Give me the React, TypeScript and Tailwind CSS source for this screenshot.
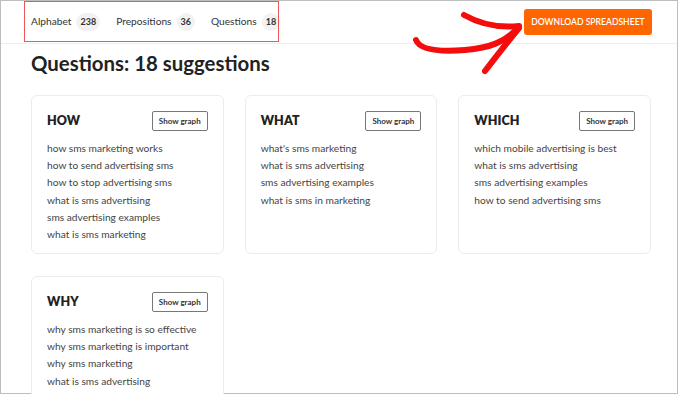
import React from "react"

const groups = [
  {
    title: "HOW",
    items: [
      "how sms marketing works",
      "how to send advertising sms",
      "how to stop advertising sms",
      "what is sms advertising",
      "sms advertising examples",
      "what is sms marketing",
    ],
  },
  {
    title: "WHAT",
    items: ["what's sms marketing", "what is sms advertising", "sms advertising examples", "what is sms in marketing"],
  },
  {
    title: "WHICH",
    items: [
      "which mobile advertising is best",
      "what is sms advertising",
      "sms advertising examples",
      "how to send advertising sms",
    ],
  },
  {
    title: "WHY",
    items: [
      "why sms marketing is so effective",
      "why sms marketing is important",
      "why sms marketing",
      "what is sms advertising",
    ],
  },
]

const tabs = [
  { label: "Alphabet", count: "238" },
  { label: "Prepositions", count: "36" },
  { label: "Questions", count: "18" },
]

function Card({ title, items }: { title: string; items: string[] }) {
  return (
    <div className="rounded-md border border-[#ececec] bg-white px-[15px] pt-[15px] pb-[14px] h-[159px]">
      <div className="flex items-center justify-between">
        <h3 className="text-[12.5px] font-extrabold text-[#222] tracking-[0.1px]">{title}</h3>
        <button className="h-[20px] px-[6px] rounded-[2px] border border-[#777] text-[8px] font-bold text-[#333]">
          Show graph
        </button>
      </div>
      <ul className="mt-[9px] flex flex-col">
        {items.map((item, i) => (
          <li key={i} className="h-[17.2px] leading-[17.2px] text-[10.2px] text-[#444] whitespace-nowrap">
            {item}
          </li>
        ))}
      </ul>
    </div>
  )
}

export default function App() {
  return (
    <div
      className="relative w-[680px] h-[394px] bg-white overflow-hidden"
      style={{ fontFamily: 'Lato, "Open Sans", sans-serif' }}
    >
      <div className="w-[678px] h-[394px] border border-[#bdbdbd]">
        <header className="h-[43px] border-b border-[#eeeeee] flex items-center justify-between pl-[30px] pr-[25px]">
          <nav className="flex items-center gap-[16px]">
            {tabs.map((t) => (
              <div key={t.label} className="flex items-center gap-[5px]">
                <span className="text-[10.2px] text-[#333]">{t.label}</span>
                <span className="h-[18px] min-w-[16px] px-[4px] rounded-full bg-[#f2f2f2] text-[9px] font-bold text-[#333] flex items-center justify-center">
                  {t.count}
                </span>
              </div>
            ))}
          </nav>
          <button className="h-[26px] w-[128px] rounded-[3px] bg-[#ff6600] text-white text-[8.6px] font-semibold uppercase">
            Download Spreadsheet
          </button>
        </header>
        <main className="px-[30px]">
          <h1 className="mt-[6px] text-[20.4px] font-bold text-[#222] leading-[26px]">Questions: 18 suggestions</h1>
          <div className="mt-[19px] grid grid-cols-3 gap-x-[21px] gap-y-[22px] w-[620px]">
            {groups.map((g) => (
              <Card key={g.title} title={g.title} items={g.items} />
            ))}
          </div>
        </main>
      </div>

      {/* annotation box around the tabs */}
      <div className="absolute left-[24px] top-[1px] w-[255px] h-[41px] border-[1.5px] border-[#f0555a] pointer-events-none" />

      {/* hand drawn arrow */}
      <svg className="absolute left-0 top-0 pointer-events-none" width="680" height="394" viewBox="0 0 680 394">
        <g fill="none" stroke="#f40d0d" strokeWidth="6" strokeLinecap="round" strokeLinejoin="round">
          <path d="M416 40 C 420 50, 440 52, 465 50 C 490 48, 505 42, 519 27" />
          <path d="M464 15 C 480 24, 500 28, 519 26" />
          <path d="M519 28 C 505 45, 495 58, 485 71" />
        </g>
      </svg>
    </div>
  )
}
